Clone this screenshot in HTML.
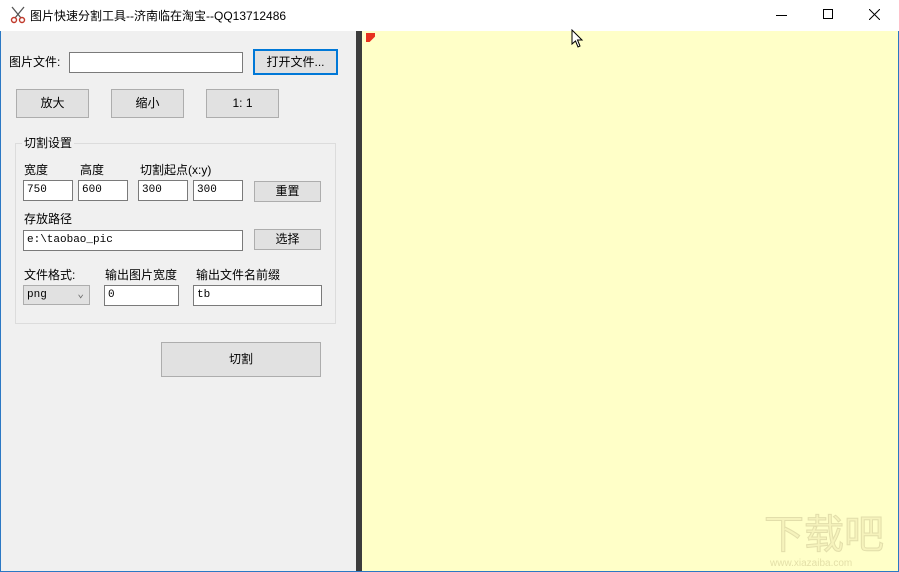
<!DOCTYPE html>
<html><head><meta charset="utf-8"><style>
*{margin:0;padding:0;box-sizing:border-box}
html{width:899px;height:572px;overflow:hidden}
body{width:899px;height:572px;position:relative;overflow:hidden;background:#f0f0f0;font-family:"Liberation Sans","Noto Sans CJK SC",sans-serif;font-size:12px;color:#000}
.a{position:absolute;white-space:nowrap}
.tb{left:0;top:0;width:899px;height:31px;background:#fff}
.title{left:30px;top:7px;font-size:12px;color:#000}
.frame{left:0;top:31px;width:899px;height:541px;border:1px solid #2b78c4;border-top:none}
.split{left:356px;top:31px;width:6px;height:540px;background:#3c3c3c}
.yel{left:362px;top:31px;width:536px;height:540px;background:#ffffc8}
.btn{position:absolute;background:#e1e1e1;border:1px solid #adadad;text-align:center;font-size:12px;white-space:nowrap}
.inp{position:absolute;background:#fff;border:1px solid #7a7a7a;font-family:"Liberation Mono","Noto Sans CJK SC",monospace;font-size:11px;padding-left:3px;white-space:nowrap}
.lbl{position:absolute;font-size:12px;white-space:nowrap}
.grp{left:15px;top:143px;width:321px;height:181px;border:1px solid #dcdcdc}
</style></head><body>
<div class="a tb"></div>
<svg class="a" style="left:9px;top:6px" width="18" height="18" viewBox="0 0 18 18"><path d="M3 1 L12 12 M15 1 L6 12" stroke="#555" stroke-width="1.3" fill="none"/><circle cx="5" cy="14" r="2.5" stroke="#c0392b" stroke-width="1.4" fill="none"/><circle cx="13" cy="14" r="2.5" stroke="#c0392b" stroke-width="1.4" fill="none"/></svg>
<div class="a title">图片快速分割工具--济南临在淘宝--QQ13712486</div>
<div class="a" style="left:776px;top:15px;width:11px;height:1px;background:#000"></div>
<div class="a" style="left:823px;top:9px;width:10px;height:10px;border:1px solid #000"></div>
<svg class="a" style="left:869px;top:9px" width="11" height="11"><path d="M0 0L11 11M11 0L0 11" stroke="#000" stroke-width="1"/></svg>
<div class="a frame"></div>
<div class="a split"></div>
<div class="a yel"></div>
<div class="a" style="left:366px;top:33px;width:9px;height:9px;background:#e8321e;clip-path:polygon(0 0,100% 0,100% 40%,40% 100%,0 100%)"></div>
<svg class="a" style="left:571px;top:29px" width="14" height="20"><path d="M1 1 L1 15 L4.5 12 L7 18 L9 17 L6.5 11 L11 11 Z" fill="#fff" stroke="#000" stroke-width="1"/></svg>
<div class="a" style="left:764px;top:512px;font-size:40px;line-height:46px;color:#f6f3bc;-webkit-text-stroke:1px #e2deaa;">下载吧</div>
<div class="a" style="left:770px;top:558px;font-size:10px;line-height:12px;color:#e3dfa8;">www.xiazaiba.com</div>

<div class="lbl" style="left:9px;top:53px">图片文件:</div>
<div class="inp" style="left:69px;top:52px;width:174px;height:21px"></div>
<div class="btn" style="left:253px;top:49px;width:85px;height:26px;border:2px solid #0078d7;line-height:22px">打开文件...</div>
<div class="btn" style="left:16px;top:89px;width:73px;height:29px;line-height:27px">放大</div>
<div class="btn" style="left:111px;top:89px;width:73px;height:29px;line-height:27px">缩小</div>
<div class="btn" style="left:206px;top:89px;width:73px;height:29px;line-height:27px">1: 1</div>

<div class="a grp"></div>
<div class="lbl" style="left:22px;top:134px;background:#f0f0f0;padding:0 2px">切割设置</div>
<div class="lbl" style="left:24px;top:161px">宽度</div>
<div class="lbl" style="left:80px;top:161px">高度</div>
<div class="lbl" style="left:140px;top:161px">切割起点(x:y)</div>
<div class="inp" style="left:23px;top:180px;width:50px;height:21px;line-height:19px">750</div>
<div class="inp" style="left:78px;top:180px;width:50px;height:21px;line-height:19px">600</div>
<div class="inp" style="left:138px;top:180px;width:50px;height:21px;line-height:19px">300</div>
<div class="inp" style="left:193px;top:180px;width:50px;height:21px;line-height:19px">300</div>
<div class="btn" style="left:254px;top:181px;width:67px;height:21px;line-height:19px">重置</div>
<div class="lbl" style="left:24px;top:210px">存放路径</div>
<div class="inp" style="left:23px;top:230px;width:220px;height:21px;line-height:19px">e:\taobao_pic</div>
<div class="btn" style="left:254px;top:229px;width:67px;height:21px;line-height:19px">选择</div>
<div class="lbl" style="left:24px;top:266px">文件格式:</div>
<div class="lbl" style="left:105px;top:266px">输出图片宽度</div>
<div class="lbl" style="left:196px;top:266px">输出文件名前缀</div>
<div class="inp" style="left:23px;top:285px;width:67px;height:20px;line-height:18px;background:#e1e1e1;border-color:#adadad">png<span style="position:absolute;right:5px;top:0;color:#666">&#8964;</span></div>
<div class="inp" style="left:104px;top:285px;width:75px;height:21px;line-height:19px">0</div>
<div class="inp" style="left:193px;top:285px;width:129px;height:21px;line-height:19px">tb</div>
<div class="btn" style="left:161px;top:342px;width:160px;height:35px;line-height:33px">切割</div>
</body></html>
